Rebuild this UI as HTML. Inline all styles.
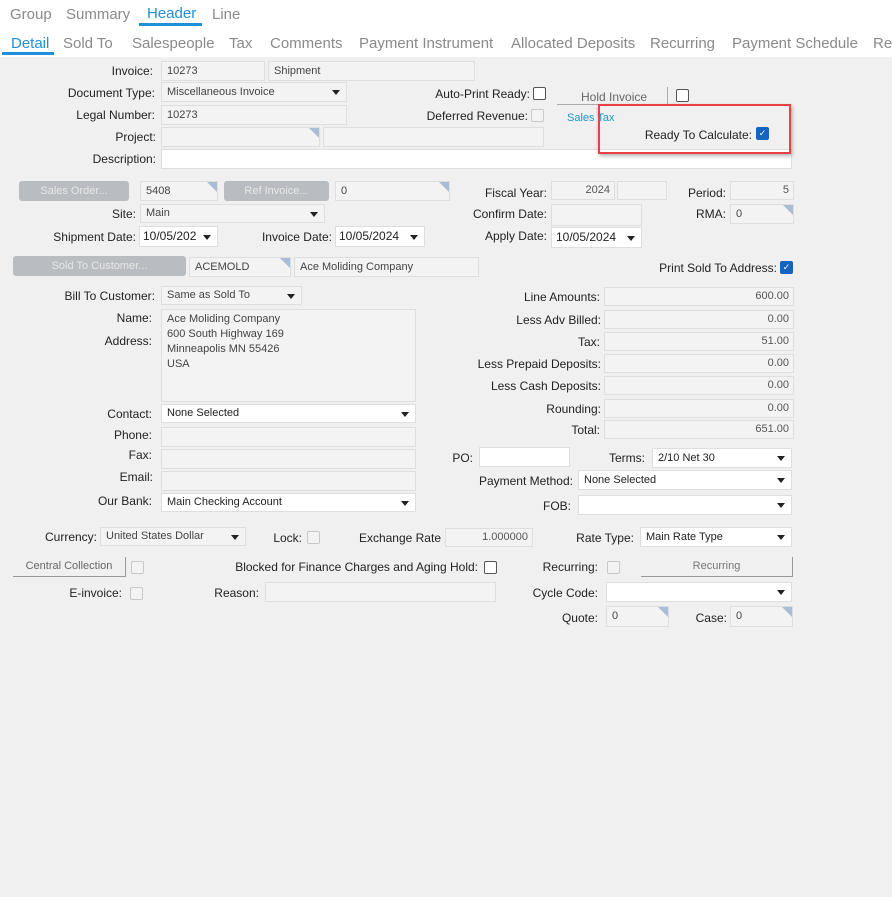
<!DOCTYPE html><html><head><style>
body{margin:0;width:892px;height:897px;background:#f0f0f0;font-family:"Liberation Sans",sans-serif;position:relative;overflow:hidden}
.top{position:absolute;left:0;top:0;width:892px;height:57px;background:#fff}
.t{position:absolute;font-size:15px;color:#8a8a8a;white-space:nowrap}
.a{color:#1e8fd8}
.u{position:absolute;height:3px;background:#1e8fd8}
.l{position:absolute;font-size:12px;color:#222;white-space:nowrap;line-height:16px}
.f{position:absolute;box-sizing:border-box;background:#f3f3f3;border:1px solid #dedede;font-size:11px;color:#444;padding-left:5px;white-space:nowrap;overflow:hidden}
.w{background:#fff}
.r{text-align:right;padding-right:4px;color:#555}
.s::after{content:"";position:absolute;right:6px;top:50%;margin-top:-2px;border-left:4px solid transparent;border-right:4px solid transparent;border-top:5px solid #222}
.c::before{content:"";position:absolute;right:0;top:0;border-left:10px solid transparent;border-top:10px solid #a9bdd6}
.b{position:absolute;box-sizing:border-box;background:#b9bcc0;border-radius:3px;color:#e8e8e8;font-size:11px;text-align:center}
.k{position:absolute;box-sizing:border-box;width:13px;height:13px;border:1px solid #555;border-radius:2px;background:#fff}
.kd{border-color:#c8c8c8;background:#f3f3f3}
.kb{background:#1565c0;border-color:#1565c0;color:#fff;font-size:9px;text-align:center;line-height:11px}
</style></head><body>
<div class="top"></div>
<div class="t" style="left:10px;top:6px">Group</div>
<div class="t" style="left:66px;top:6px">Summary</div>
<div class="t a" style="left:147px;top:5px">Header</div>
<div class="u" style="left:139px;top:23px;width:63px"></div>
<div class="t" style="left:212px;top:6px">Line</div>
<div class="t a" style="left:11px;top:35px">Detail</div>
<div class="u" style="left:2px;top:52px;width:52px"></div>
<div class="t" style="left:63px;top:35px">Sold To</div>
<div class="t" style="left:132px;top:35px">Salespeople</div>
<div class="t" style="left:229px;top:35px">Tax</div>
<div class="t" style="left:270px;top:35px">Comments</div>
<div class="t" style="left:359px;top:35px">Payment Instrument</div>
<div class="t" style="left:511px;top:35px">Allocated Deposits</div>
<div class="t" style="left:650px;top:35px">Recurring</div>
<div class="t" style="left:732px;top:35px">Payment Schedule</div>
<div class="t" style="left:873px;top:35px">Re</div>

<div class="l" style="right:739px;top:63px">Invoice:</div>
<div class="f" style="left:161px;top:61px;width:104px;height:20px;line-height:18px">10273</div>
<div class="f" style="left:268px;top:61px;width:207px;height:20px;line-height:18px">Shipment</div>
<div class="l" style="right:737px;top:85px">Document Type:</div>
<div class="f s" style="left:161px;top:82px;width:186px;height:20px;line-height:18px">Miscellaneous Invoice</div>
<div class="l" style="right:737px;top:107px">Legal Number:</div>
<div class="f" style="left:161px;top:105px;width:186px;height:20px;line-height:18px">10273</div>
<div class="l" style="right:736px;top:129px">Project:</div>
<div class="f c" style="left:161px;top:127px;width:159px;height:20px"></div>
<div class="f" style="left:323px;top:127px;width:221px;height:20px"></div>
<div class="l" style="right:736px;top:151px">Description:</div>
<div class="f w" style="left:161px;top:149px;width:631px;height:20px"></div>

<div class="l" style="right:362px;top:86px">Auto-Print Ready:</div>
<div class="k" style="left:533px;top:87px"></div>
<div class="l" style="right:364px;top:108px">Deferred Revenue:</div>
<div class="k kd" style="left:531px;top:109px"></div>
<div class="l" style="left:581px;top:89px;color:#666">Hold Invoice</div>
<div style="position:absolute;left:557px;top:104px;width:110px;height:1px;background:#aaa"></div>
<div style="position:absolute;left:667px;top:87px;width:1px;height:17px;background:#aaa"></div>
<div class="k" style="left:676px;top:89px"></div>
<div class="l" style="left:567px;top:110px;font-size:11px;color:#1a96c8">Sales Tax</div>
<div style="position:absolute;left:598px;top:104px;width:193px;height:50px;box-sizing:border-box;border:2px solid #ea4242;box-shadow:1px 2px 4px rgba(0,0,0,.3)"></div>
<div class="l" style="right:140px;top:127px">Ready To Calculate:</div>
<div class="k kb" style="left:756px;top:127px">✓</div>

<div class="b" style="left:19px;top:181px;width:110px;height:20px;line-height:20px">Sales Order...</div>
<div class="f c" style="left:140px;top:181px;width:78px;height:20px;line-height:18px">5408</div>
<div class="b" style="left:224px;top:181px;width:105px;height:20px;line-height:20px">Ref Invoice...</div>
<div class="f c" style="left:335px;top:181px;width:115px;height:20px;line-height:18px">0</div>
<div class="l" style="right:345px;top:185px">Fiscal Year:</div>
<div class="f r" style="left:551px;top:181px;width:64px;height:19px;line-height:17px">2024</div>
<div class="f" style="left:617px;top:181px;width:50px;height:19px"></div>
<div class="l" style="right:166px;top:185px">Period:</div>
<div class="f r" style="left:730px;top:181px;width:64px;height:19px;line-height:17px">5</div>
<div class="l" style="right:756px;top:206px">Site:</div>
<div class="f s" style="left:140px;top:204px;width:185px;height:19px;line-height:17px">Main</div>
<div class="l" style="right:345px;top:206px">Confirm Date:</div>
<div class="f" style="left:551px;top:204px;width:91px;height:22px"></div>
<div class="l" style="right:166px;top:206px">RMA:</div>
<div class="f c" style="left:730px;top:204px;width:64px;height:20px;line-height:18px">0</div>
<div class="l" style="right:756px;top:229px">Shipment Date:</div>
<div class="f w s" style="left:139px;top:226px;width:79px;height:21px;line-height:19px;padding-left:3px;color:#222;font-size:12px">10/05/202</div>
<div class="l" style="right:560px;top:229px">Invoice Date:</div>
<div class="f w s" style="left:335px;top:226px;width:90px;height:21px;line-height:19px;padding-left:3px;color:#222;font-size:12px">10/05/2024</div>
<div class="l" style="right:345px;top:228px">Apply Date:</div>
<div class="f w s" style="left:551px;top:227px;width:91px;height:21px;line-height:19px;padding-left:4px;color:#222;font-size:12px">10/05/2024</div>

<div class="b" style="left:13px;top:256px;width:173px;height:20px;line-height:20px">Sold To Customer...</div>
<div class="f c" style="left:189px;top:257px;width:102px;height:20px;line-height:18px">ACEMOLD</div>
<div class="f" style="left:294px;top:257px;width:185px;height:20px;line-height:18px">Ace Moliding Company</div>
<div class="l" style="right:115px;top:260px">Print Sold To Address:</div>
<div class="k kb" style="left:780px;top:261px">✓</div>

<div class="l" style="right:737px;top:288px">Bill To Customer:</div>
<div class="f s" style="left:161px;top:286px;width:141px;height:19px;line-height:17px">Same as Sold To</div>
<div class="l" style="right:740px;top:310px">Name:</div>
<div class="l" style="right:740px;top:333px">Address:</div>
<div class="f" style="left:161px;top:309px;width:255px;height:93px;line-height:15px;padding-top:2px">Ace Moliding Company<br>600 South Highway 169<br>Minneapolis MN 55426<br>USA</div>
<div class="l" style="right:740px;top:406px">Contact:</div>
<div class="f w s" style="left:161px;top:404px;width:255px;height:19px;line-height:17px;color:#222">None Selected</div>
<div class="l" style="right:740px;top:427px">Phone:</div>
<div class="f" style="left:161px;top:427px;width:255px;height:20px"></div>
<div class="l" style="right:740px;top:447px">Fax:</div>
<div class="f" style="left:161px;top:449px;width:255px;height:20px"></div>
<div class="l" style="right:739px;top:469px">Email:</div>
<div class="f" style="left:161px;top:471px;width:255px;height:20px"></div>
<div class="l" style="right:740px;top:493px">Our Bank:</div>
<div class="f w s" style="left:161px;top:493px;width:255px;height:19px;line-height:17px;color:#222">Main Checking Account</div>

<div class="l" style="right:292px;top:289px">Line Amounts:</div>
<div class="f r" style="left:604px;top:287px;width:190px;height:19px;line-height:17px">600.00</div>
<div class="l" style="right:291px;top:312px">Less Adv Billed:</div>
<div class="f r" style="left:604px;top:310px;width:190px;height:19px;line-height:17px">0.00</div>
<div class="l" style="right:292px;top:334px">Tax:</div>
<div class="f r" style="left:604px;top:332px;width:190px;height:19px;line-height:17px">51.00</div>
<div class="l" style="right:291px;top:356px">Less Prepaid Deposits:</div>
<div class="f r" style="left:604px;top:354px;width:190px;height:19px;line-height:17px">0.00</div>
<div class="l" style="right:291px;top:378px">Less Cash Deposits:</div>
<div class="f r" style="left:604px;top:376px;width:190px;height:19px;line-height:17px">0.00</div>
<div class="l" style="right:291px;top:401px">Rounding:</div>
<div class="f r" style="left:604px;top:399px;width:190px;height:19px;line-height:17px">0.00</div>
<div class="l" style="right:292px;top:422px">Total:</div>
<div class="f r" style="left:604px;top:420px;width:190px;height:19px;line-height:17px">651.00</div>
<div class="l" style="right:419px;top:450px">PO:</div>
<div class="f w" style="left:479px;top:447px;width:91px;height:20px"></div>
<div class="l" style="right:247px;top:450px">Terms:</div>
<div class="f w s" style="left:652px;top:448px;width:140px;height:20px;line-height:18px;color:#222">2/10 Net 30</div>
<div class="l" style="right:319px;top:473px">Payment Method:</div>
<div class="f w s" style="left:578px;top:470px;width:214px;height:20px;line-height:18px;color:#222">None Selected</div>
<div class="l" style="right:321px;top:498px">FOB:</div>
<div class="f w s" style="left:578px;top:495px;width:214px;height:20px"></div>

<div class="l" style="right:795px;top:529px">Currency:</div>
<div class="f s" style="left:100px;top:527px;width:146px;height:19px;line-height:17px">United States Dollar</div>
<div class="l" style="right:590px;top:530px">Lock:</div>
<div class="k kd" style="left:307px;top:531px"></div>
<div class="l" style="right:451px;top:530px">Exchange Rate</div>
<div class="f r" style="left:445px;top:528px;width:88px;height:19px;line-height:17px">1.000000</div>
<div class="l" style="right:258px;top:530px">Rate Type:</div>
<div class="f w s" style="left:640px;top:527px;width:152px;height:20px;line-height:18px;color:#222">Main Rate Type</div>

<div style="position:absolute;left:13px;top:557px;width:113px;height:20px;box-sizing:border-box;border-right:1px solid #999;border-bottom:1px solid #999;font-size:11px;color:#666;text-align:center;line-height:19px">Central Collection</div>
<div class="k kd" style="left:131px;top:561px"></div>
<div class="l" style="right:414px;top:559px">Blocked for Finance Charges and Aging Hold:</div>
<div class="k" style="left:484px;top:561px"></div>
<div class="l" style="right:294px;top:559px">Recurring:</div>
<div class="k kd" style="left:607px;top:561px"></div>
<div style="position:absolute;left:641px;top:557px;width:152px;height:20px;box-sizing:border-box;border-right:1px solid #999;border-bottom:1px solid #999;font-size:11px;color:#777;text-align:center;line-height:19px">Recurring</div>
<div class="l" style="right:770px;top:585px">E-invoice:</div>
<div class="k kd" style="left:130px;top:587px"></div>
<div class="l" style="right:633px;top:585px">Reason:</div>
<div class="f" style="left:265px;top:582px;width:231px;height:20px"></div>
<div class="l" style="right:294px;top:585px">Cycle Code:</div>
<div class="f w s" style="left:606px;top:582px;width:186px;height:20px"></div>
<div class="l" style="right:294px;top:610px">Quote:</div>
<div class="f c" style="left:606px;top:606px;width:63px;height:21px;line-height:19px">0</div>
<div class="l" style="right:165px;top:610px">Case:</div>
<div class="f c" style="left:730px;top:606px;width:63px;height:21px;line-height:19px">0</div>
</body></html>
